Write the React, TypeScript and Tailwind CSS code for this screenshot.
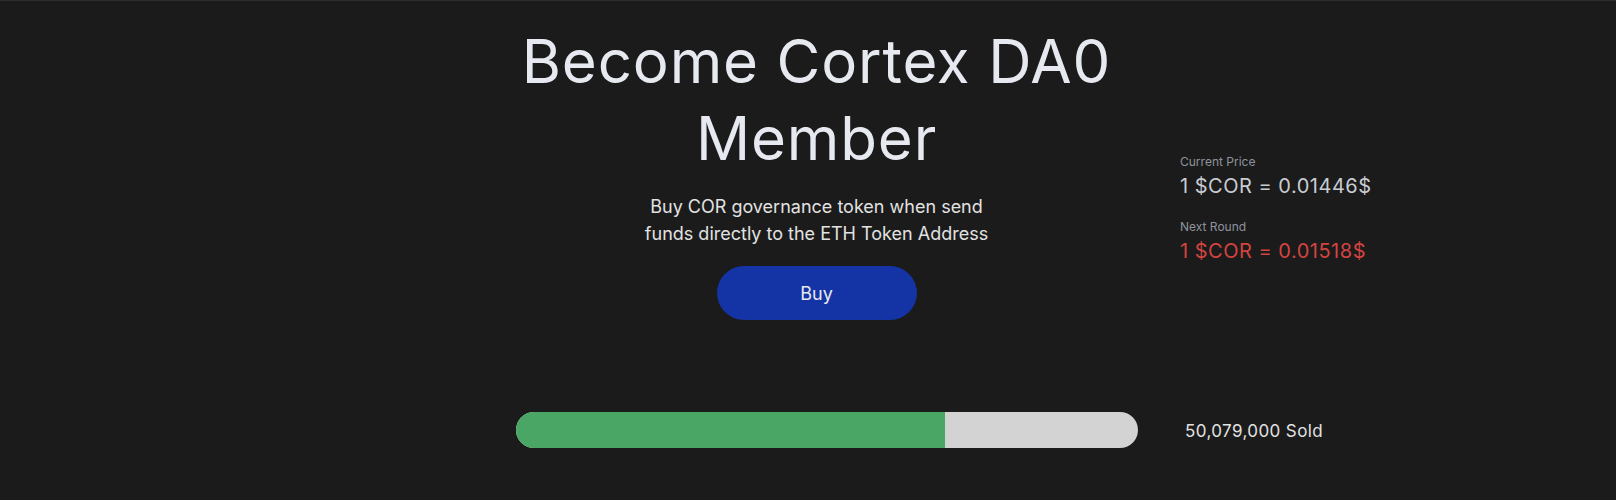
import React from "react";

const font = { fontFamily: "Inter, 'Noto Sans', sans-serif" };

const sold = 69;

const PriceRow = ({ label, value, tone }: { label: string; value: string; tone: string }) => (
  <div className="flex flex-col gap-[2px]">
    <span className="text-[12px] leading-4 text-[#8f939b]">{label}</span>
    <span className={`text-[20px] leading-7 tracking-[0.5px] ${tone}`}>{value}</span>
  </div>
);

export default function App() {
  return (
    <div style={font} className="w-full h-[500px] bg-[#1b1b1b] border-t border-[#2d2d2d] overflow-hidden">
      {/* Hero */}
      <section className="grid grid-cols-[500px_633px_auto] pt-[22px]">
        <div />
        <div className="flex flex-col items-center text-center">
          <h1 className="text-[60px] leading-[77px] font-normal tracking-[0.85px] text-[#e7e9f0]">
            Become Cortex DA0 Member
          </h1>
          <p className="mt-4 w-[360px] text-[18px] leading-[27px] text-[#e2e2e2]">
            Buy COR governance token when send funds directly to the ETH Token Address
          </p>
          <button className="mt-[19px] w-[200px] h-[54px] rounded-full bg-[#1434a5] text-[18px] text-[#e7e9f0]">
            Buy
          </button>
        </div>
        {/* Prices */}
        <div className="ml-[47px] mt-[131px] flex flex-col gap-[19px]">
          <PriceRow label="Current Price" value="1 $COR = 0.01446$" tone="text-[#c9ccd3]" />
          <PriceRow label="Next Round" value="1 $COR = 0.01518$" tone="text-[#d4443f]" />
        </div>
      </section>

      {/* Progress */}
      <div className="mt-[92px] pl-[516px] flex items-center gap-[47px]">
        <div className="w-[622px] h-[36px] rounded-full bg-[#d3d3d3] overflow-hidden">
          <div className="h-full bg-[#4aa664]" style={{ width: `${sold}%` }} />
        </div>
        <span className="pt-[3px] text-[17px] tracking-[0.4px] text-[#e2e2e2]">50,079,000 Sold</span>
      </div>
    </div>
  );
}
